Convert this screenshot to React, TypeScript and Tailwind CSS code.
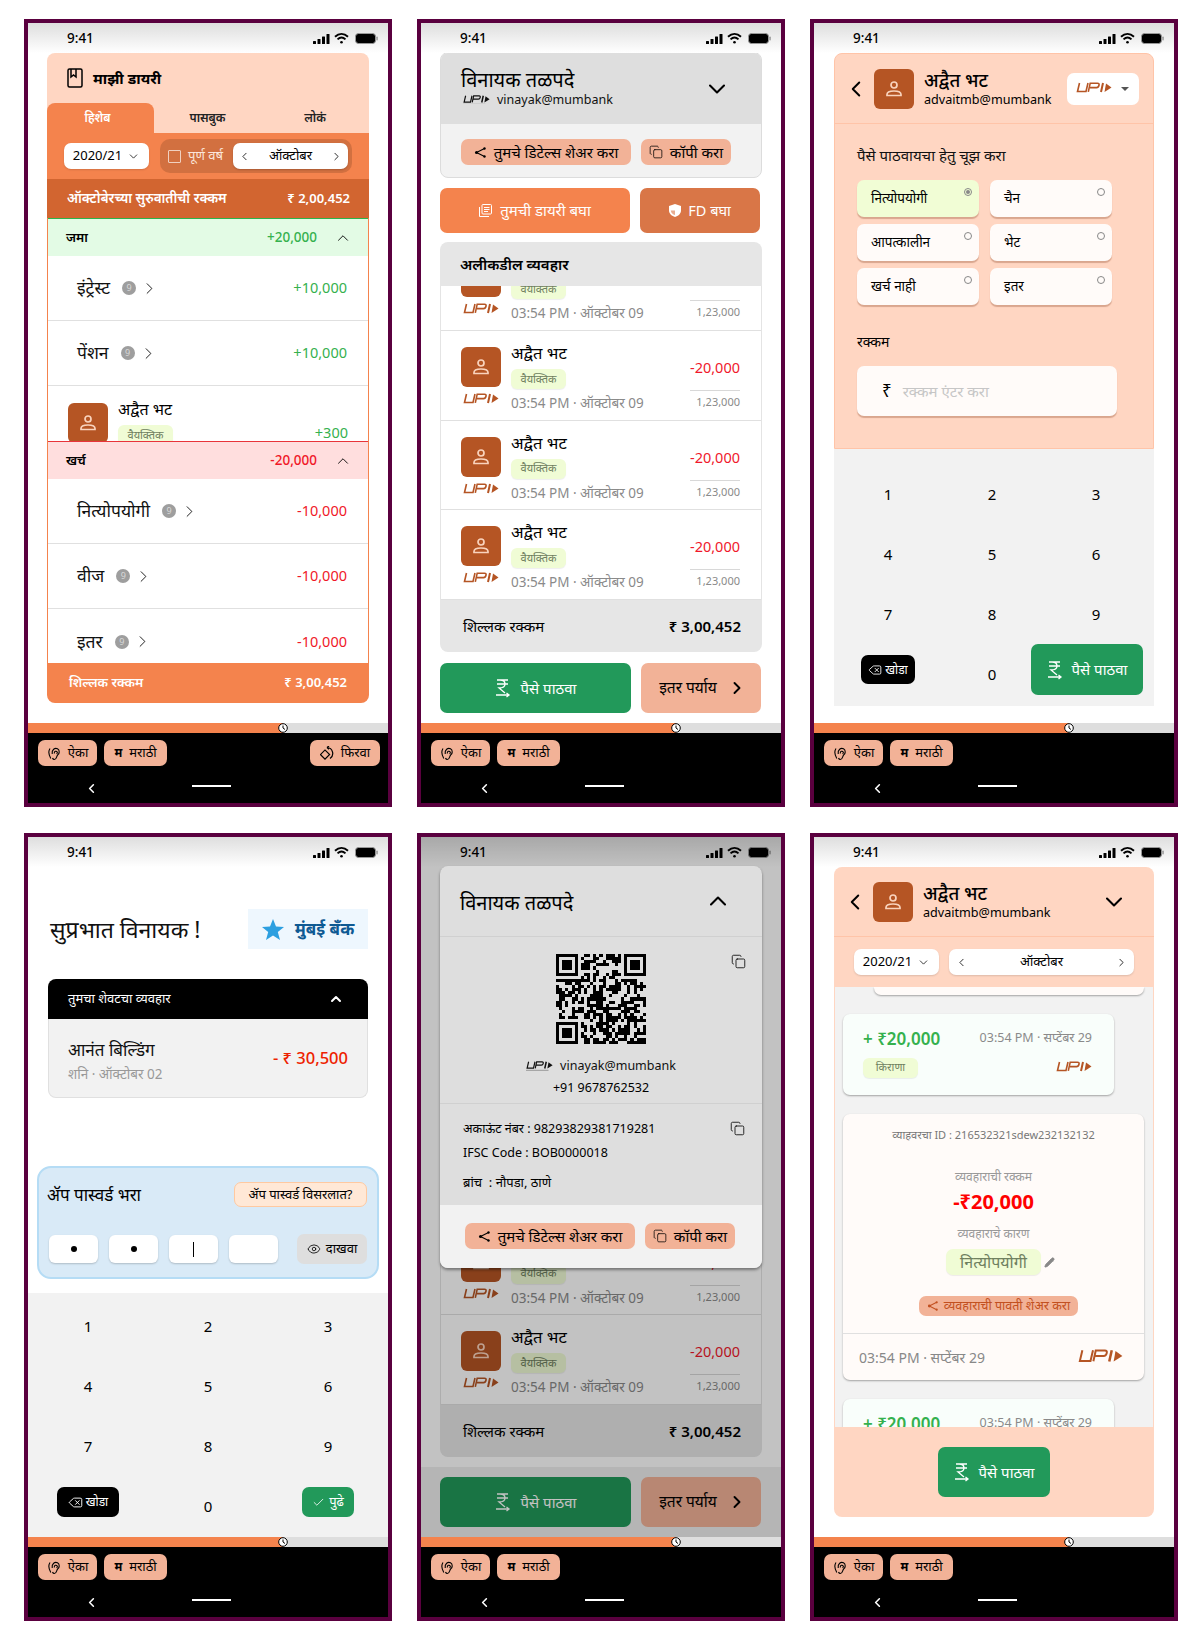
import React from "react";
import { ChevronDown, ChevronUp, ChevronLeft, ChevronRight, Copy, Delete, Eye, Check, Pencil } from "lucide-react";

const Upi = ({ color = "#b55524", w = 36, sub = false }: { color?: string; w?: number; sub?: boolean }) => (
  <svg width={w} height={(w * 13) / 36} viewBox="0 0 36 13" fill="none">
    <path d="M3.500 1 L1.500 9.500 H10 L12 1" stroke={color} strokeWidth="1.600" />
    <path d="M12.300 9.800 L14.200 1.200 H21.500 Q23.500 1.200 23 3.300 Q22.500 5.600 20.500 5.600 H14" stroke={color} strokeWidth="1.600" />
    <path d="M27 1 L25 10" stroke={color} strokeWidth="2" />
    <path d="M30 1.500 L35.500 5.500 L28.500 10 Z" fill={color} />
    {sub && <rect x="0" y="11.800" width="30" height="1" fill={color} opacity=".45" />}
  </svg>
);

const Person = () => (
  <svg width="18" height="18" viewBox="0 0 18 18" fill="none" stroke="#f9d3bd" strokeWidth="1.700">
    <circle cx="9" cy="5" r="3" />
    <path d="M2 15.500 v-1 c0-2.400 3-3.500 7-3.500 s7 1.100 7 3.500 v1 z" />
  </svg>
);

const Avatar = () => (
  <div className="w-[40px] h-[40px] rounded-[6px] bg-[#b55524] flex items-center justify-center shrink-0">
    <Person />
  </div>
);

const ShareIcon = ({ color = "#000", size = 13 }: { color?: string; size?: number }) => (
  <svg width={size} height={size} viewBox="0 0 13 13" fill={color} stroke={color} strokeWidth="1.100">
    <path d="M10.500 2.500 L2.500 6.500 L10.500 10.500" fill="none" />
    <circle cx="10.500" cy="2.500" r="1.200" stroke="none" />
    <circle cx="2.500" cy="6.500" r="1.500" stroke="none" />
    <circle cx="10.500" cy="10.500" r="1.200" stroke="none" />
  </svg>
);

const EarIcon = () => (
  <svg width="14" height="15" viewBox="0 0 14 15" fill="none" stroke="#000" strokeWidth="1.100">
    <path d="M3 2.500 Q0.300 6.500 3.800 12.500" />
    <path d="M5.200 8 C4.500 3.500 8 1.500 10.500 2.800 C13 4.300 12.500 7.500 10.800 8.800 C9.300 10 10 13.500 7.300 13.500 C6.300 13.500 5.800 12.800 5.500 12" />
    <path d="M7.300 7.500 C7 5.300 9.300 4.500 10.200 6 C10.600 6.800 10.200 7.500 9.500 7.800" />
  </svg>
);

const RupeeSend = () => (
  <svg width="16" height="20" viewBox="0 0 16 20" fill="none" stroke="#fff" strokeWidth="1.300">
    <path d="M2 2 H13 M2 6 H13 M5 2 C9 2 10 4 10 6 C10 8 8 10 4 10 L10 15" />
    <path d="M1 17 H14 M11.500 15 L14 17 L11.500 19" />
  </svg>
);

const Status = () => (
  <div className="h-[30px] shrink-0 relative flex items-center justify-between pl-[39px] pr-[10px] pt-[1px] bg-gradient-to-b from-[#dedede] to-[#ffffff]">
    <span className="text-[13.500px] text-black font-medium">9:41</span>
    <div className="flex items-center gap-[4px]">
      <svg width="17" height="10" viewBox="0 0 17 10" fill="#000">
        <rect x="0" y="7" width="3" height="3" rx=".5" /><rect x="4.500" y="5" width="3" height="5" rx=".5" /><rect x="9" y="2.500" width="3" height="7.500" rx=".5" /><rect x="13.500" y="0" width="3" height="10" rx=".5" />
      </svg>
      <svg width="15" height="11" viewBox="0 0 15 11" fill="none" stroke="#000" strokeWidth="1.900">
        <path d="M1 3.800 C5 0 10 0 14 3.800" /><path d="M3.500 6.400 C6 4 9 4 11.500 6.400" /><circle cx="7.500" cy="9.300" r="1.300" fill="#000" stroke="none" />
      </svg>
      <svg width="23" height="11" viewBox="0 0 23 11" className="ml-[2px]">
        <rect x=".5" y=".5" width="20" height="10" rx="3" fill="#000" stroke="#999" />
        <rect x="21.300" y="3.500" width="1.500" height="4" rx=".7" fill="#999" />
      </svg>
    </div>
  </div>
);

const Pill = ({ icon, label, w, text = "text-[13px]" }: { icon: React.ReactNode; label: string; w: string; text?: string }) => (
  <div className={`h-[26px] rounded-[7px] bg-[#f2b297] flex items-center justify-center gap-[7px] text-black ${w} ${text}`}>
    {icon}
    <span>{label}</span>
  </div>
);

const Bottom = ({ rotate = false }: { rotate?: boolean }) => (
  <div className="h-[80px] shrink-0 flex flex-col">
    <div className="h-[10px] bg-[#dedede] relative flex">
      <div className="w-[255px] h-full bg-[#f4834d]" />
      <svg className="absolute left-[250px] top-0" width="10" height="10" viewBox="0 0 10 10" fill="#fff" stroke="#000">
        <circle cx="5" cy="5" r="4.300" /><path d="M5 2.500 V5 L7 6.500" fill="none" />
      </svg>
    </div>
    <div className="flex-1 bg-black flex flex-col">
      <div className="flex items-center justify-between pl-[10px] pr-[8px] pt-[7px]">
        <div className="flex gap-[7px]">
          <Pill icon={<EarIcon />} label="ऐका" w="w-[59px]" />
          <Pill icon={<b className="text-[12px]">म</b>} label="मराठी" w="w-[63px]" />
        </div>
        {rotate && (
          <Pill
            w="w-[70px]"
            label="फिरवा"
            icon={
              <svg width="14" height="14" viewBox="0 0 14 14" fill="none" stroke="#000" strokeWidth="1.200">
                <rect x="1.800" y="5.300" width="6.500" height="6.500" transform="rotate(45 5 8.500)" />
                <path d="M7 1.500 A6 6 0 0 1 10 12.500 M7 1.500 L9 0 M7 1.500 L9 3.200" />
              </svg>
            }
          />
        )}
      </div>
      <div className="relative flex-1">
        <ChevronLeft size={15} color="#fff" strokeWidth={2.500} className="absolute left-[56px] top-[15px]" />
        <div className="absolute left-[164px] top-[19px] w-[39px] h-[2px] bg-white" />
      </div>
    </div>
  </div>
);

const Phone = ({ children, rotate }: { children: React.ReactNode; rotate?: boolean }) => (
  <div className="w-[368px] h-[788px] border-4 border-[#5a003f] flex flex-col bg-white">
    <div className="h-[700px] shrink-0 relative flex flex-col overflow-hidden">{children}</div>
    <Bottom rotate={rotate} />
  </div>
);

const YearDrop = () => (
  <div className="w-[85px] h-[26px] rounded-[7px] bg-white shadow-[0_1px_2px_#0002] flex items-center justify-center gap-[5px] text-[13px] text-black shrink-0">
    2020/21 <ChevronDown size={13} strokeWidth={1.400} />
  </div>
);

const Badge = () => (
  <span className="w-[14px] h-[14px] rounded-full bg-[#9e9e9e] text-[#d8d8d8] text-[9px] flex items-center justify-center">9</span>
);

const Row = ({ name, amt, color }: { name: string; amt: string; color: string }) => (
  <div className="h-[65px] shrink-0 border-b border-[#e0e0e0] flex items-center pl-[29px] pr-[21px] last:border-b-0">
    <span className="text-[17.500px] text-[#111] mr-[12px] leading-none">{name}</span>
    <Badge />
    <ChevronRight size={19} strokeWidth={1.100} className="ml-[4px]" />
    <span className="ml-auto text-[14.500px]" style={{ color }}>{amt}</span>
  </div>
);

const Tag = ({ children }: { children: React.ReactNode }) => (
  <span className="flex items-center justify-center h-[20px] w-[55px] rounded-[6px] bg-[#f0fcd5] text-[#6f8060] text-[11px] shadow-[0_1px_1px_#0001]">{children}</span>
);

const Screen1 = () => (
  <>
    <Status />
    <div className="ml-[19px] w-[322px] h-[650px] rounded-[8px] overflow-hidden flex flex-col bg-white">
      <div className="h-[50px] bg-[#ffd6c2] flex items-center pl-[20px] gap-[10px]">
        <svg width="16" height="20" viewBox="0 0 16 20" fill="none" stroke="#000" strokeWidth="1.500">
          <rect x="1" y="1" width="14" height="18" rx="1.500" /><path d="M4 1 V9 L6.500 7 L9 9 V1" />
        </svg>
        <b className="text-[15px] text-black">माझी डायरी</b>
      </div>
      <div className="h-[30px] bg-[#ffd6c2] flex text-[12px] font-semibold text-[#222]">
        <div className="w-[107px] rounded-t-[8px] bg-[#f4834d] text-white flex items-center justify-center pr-[6px]">हिशेब</div>
        <div className="w-[107px] flex items-center justify-center">पासबुक</div>
        <div className="w-[108px] flex items-center justify-center">लोकं</div>
      </div>
      <div className="h-[46px] bg-[#f4834d] flex items-center pl-[17px] gap-[11px]">
        <YearDrop />
        <div className="w-[192px] h-[34px] rounded-[10px] bg-[#d27040] flex items-center pl-[8px] pr-[4px]">
          <span className="w-[13px] h-[13px] border border-[#f0d0c0] rounded-[1px] mr-[7px]" />
          <span className="text-[13px] text-[#fbe6da]">पूर्ण वर्ष</span>
          <div className="ml-auto w-[115px] h-[26px] rounded-[7px] bg-white shadow-[0_1px_2px_#0003] flex items-center justify-between px-[5px] text-[13px]">
            <ChevronLeft size={13} strokeWidth={1.500} /><span>ऑक्टोबर</span><ChevronRight size={13} strokeWidth={1.500} />
          </div>
        </div>
      </div>
      <div className="h-[39px] bg-[#d26530] flex items-center justify-between pl-[20px] pr-[19px] text-white text-[13.500px] font-semibold">
        <span>ऑक्टोबेरच्या सुरुवातीची रक्कम</span><span className="text-[13px]">₹ 2,00,452</span>
      </div>
      <div className="flex-1 border-x border-[#f4834d] flex flex-col min-h-0">
        <div className="h-[38px] shrink-0 border-t border-[#2db34a] bg-[#e3fbe5] flex items-center pl-[18px] pr-[16px]">
          <b className="text-[13px] font-semibold">जमा</b>
          <span className="ml-auto text-[13.500px] font-medium text-[#35b14e] mr-[17px]">+20,000</span>
          <ChevronUp size={18} strokeWidth={1.200} />
        </div>
        <div className="h-[185px] shrink-0 overflow-hidden">
          <Row name="इंट्रेस्ट" amt="+10,000" color="#35b14e" />
          <Row name="पेंशन" amt="+10,000" color="#35b14e" />
          <div className="h-[65px] flex pl-[20px] pr-[20px] pt-[17px] gap-[10px]">
            <Avatar />
            <div>
              <div className="text-[16px] leading-[18px] mt-[-3px]">अद्वैत भट</div>
              <div className="mt-[7px]"><Tag>वैयक्तिक</Tag></div>
            </div>
            <span className="ml-auto text-[14.500px] leading-[20px] text-[#35b14e] mt-[19px]">+300</span>
          </div>
        </div>
        <div className="h-[38px] shrink-0 border-t border-[#e8343a] bg-[#ffdede] flex items-center pl-[18px] pr-[16px]">
          <b className="text-[13px] font-semibold">खर्च</b>
          <span className="ml-auto text-[13.500px] font-medium text-[#f01828] mr-[17px]">-20,000</span>
          <ChevronUp size={18} strokeWidth={1.200} />
        </div>
        <div className="flex-1 min-h-0 overflow-hidden">
          <Row name="नित्योपयोगी" amt="-10,000" color="#f01828" />
          <Row name="वीज" amt="-10,000" color="#f01828" />
          <Row name="इतर" amt="-10,000" color="#f01828" />
        </div>
      </div>
      <div className="h-[40px] shrink-0 bg-[#f4834d] flex items-center justify-between pl-[22px] pr-[22px] text-white text-[13px] font-semibold">
        <span>शिल्लक रक्कम</span><span>₹ 3,00,452</span>
      </div>
    </div>
  </>
);

const Handle = ({ text }: { text: string }) => (
  <div className="flex items-center gap-[7px] text-[12.500px] text-[#111] leading-[16px]">
    <Upi color="#111" w={27} sub />
    <span>{text}</span>
  </div>
);

const ShareRow = () => (
  <div className="flex gap-[10px]">
    <Pill w="w-[170px]" text="text-[15px]" label="तुमचे डिटेल्स शेअर करा" icon={<ShareIcon />} />
    <Pill w="w-[90px]" text="text-[15px]" label="कॉपी करा" icon={<Copy size={14} strokeWidth={1.300} />} />
  </div>
);

const TxItem = () => (
  <div className="h-[89.700px] shrink-0 border-b border-[#e0e0e0] flex pl-[20px] pr-[21px] pt-[16px]">
    <div className="flex flex-col items-center w-[40px] shrink-0">
      <Avatar />
      <div className="mt-[6px]"><Upi /></div>
    </div>
    <div className="ml-[10px] flex flex-col">
      <div className="text-[16.500px] leading-[18px] mt-[-3px]">अद्वैत भट</div>
      <div className="mt-[7px]"><Tag>वैयक्तिक</Tag></div>
      <div className="mt-[6px] text-[13.500px] text-[#8a8a8a] leading-[16px] whitespace-nowrap">03:54 PM · ऑक्टोबर 09</div>
    </div>
    <div className="ml-auto flex flex-col items-end">
      <span className="text-[14.500px] text-[#f0182b] leading-[20px] mt-[10px]">-20,000</span>
      <div className="w-[50px] h-px bg-[#d8d8d8] mt-[13px]" />
      <span className="text-[11px] text-[#8a8a8a] leading-[18px] mt-[2px]">1,23,000</span>
    </div>
  </div>
);

const HomeBody = ({ dim = false }: { dim?: boolean }) => (
  <>
    <Status />
    <div className="ml-[19px] w-[322px] flex flex-col">
      <div className={`h-[126px] rounded-[8px] border border-[#dcdcdc] overflow-hidden flex flex-col bg-[#f2f2f2] mt-[-1px] ${dim ? "mb-[1px]" : "mb-[10px]"}`}>
        <div className="h-[71px] bg-[#dedede] flex items-center justify-between pl-[20px] pr-[30px]">
          <div>
            <div className="text-[20px] leading-[24px] mt-[-2px]">विनायक तळपदे</div>
            <div className="pl-[2px]"><Handle text="vinayak@mumbank" /></div>
          </div>
          <ChevronDown size={28} strokeWidth={1.800} />
        </div>
        <div className="pl-[20px] pt-[15px]"><ShareRow /></div>
      </div>
      <div className="flex gap-[10px] mb-[9px] text-white text-[15px]">
        <div className="w-[190px] h-[45px] rounded-[7px] bg-[#f4834d] flex items-center justify-center gap-[8px]">
          <svg width="13" height="13" viewBox="0 0 13 13" fill="none" stroke="#fff" strokeWidth="1"><rect x="3" y=".5" width="9.500" height="9.500" rx="1" /><path d="M.5 3 V12.500 H10 M5 3.500 H10.500 M5 5.500 H10.500 M5 7.500 H9" /></svg>
          तुमची डायरी बघा
        </div>
        <div className="w-[120px] h-[45px] rounded-[7px] bg-[#d97647] flex items-center justify-center gap-[7px] text-[14.500px]">
          <svg width="12" height="13" viewBox="0 0 12 13" fill="#fff"><path d="M6 0 L12 2 V6.500 C12 10 9 12 6 13 C3 12 0 10 0 6.500 V2 Z" /><path d="M6 2 V6.500 H1.800 C2 9 4 10.500 6 11 Z" fill="#d97647" opacity=".6" /></svg>
          FD बघा
        </div>
      </div>
      <div className="h-[410px] rounded-[8px] overflow-hidden flex flex-col bg-white">
        <div className="h-[44px] shrink-0 bg-[#e6e6e6] flex items-center pl-[20px] text-[15px] font-semibold">अलीकडील व्यवहार</div>
        <div className="h-[314px] shrink-0 flex flex-col justify-end overflow-hidden border-x border-[#e4e4e4]">
          <TxItem /><TxItem /><TxItem /><TxItem />
        </div>
        <div className="flex-1 bg-[#e6e6e6] flex items-center justify-between pl-[23px] pr-[21px]">
          <span className="text-[15px]">शिल्लक रक्कम</span><span className="text-[15px] font-semibold">₹ 3,00,452</span>
        </div>
      </div>
    </div>
    <div className={`mt-auto h-[70px] shrink-0 flex gap-[10px] pl-[19px] pt-[10px] ${dim ? "bg-[#eeeeee]" : ""}`}>
      <div className="w-[191px] h-[50px] rounded-[7px] bg-[#22995a] text-white text-[15px] flex items-center justify-center gap-[10px]">
        <RupeeSend /> पैसे पाठवा
      </div>
      <div className="w-[120px] h-[50px] rounded-[7px] bg-[#f2b297] text-[15.500px] flex items-center justify-center gap-[10px] pl-[4px]">
        इतर पर्याय <ChevronRight size={20} strokeWidth={2.300} />
      </div>
    </div>
  </>
);

const Key = ({ n }: { n: string }) => (
  <div className="h-[60px] flex items-center justify-center text-[15px] text-black">{n}</div>
);

const Option = ({ label, on }: { label: string; on?: boolean }) => (
  <div className={`h-[37px] rounded-[7px] shadow-[0_2px_1px_#d9a68e] flex items-center pl-[14px] text-[13.500px] relative ${on ? "bg-[#f1fdd5]" : "bg-[#fffbf9]"}`}>
    {label}
    <span className="absolute right-[7px] top-[8px] w-[8px] h-[8px] rounded-full border border-[#888] flex items-center justify-center">
      {on && <span className="w-[4px] h-[4px] rounded-full bg-[#888]" />}
    </span>
  </div>
);

const Screen3 = () => (
  <>
    <Status />
    <div className="ml-[20px] w-[320px] flex flex-col">
      <div className="h-[396px] bg-[#ffd6c2] border border-[#ffc4a8] rounded-t-[8px] flex flex-col">
        <div className="h-[70px] border-b border-[#ffc4a8] flex items-center pl-[8px]">
          <ChevronLeft size={26} strokeWidth={1.800} className="mr-[5px] shrink-0" />
          <div className="mr-[10px]"><Avatar /></div>
          <div className="flex-1">
            <div className="text-[18.500px] leading-[24px] font-medium mt-[-2px]">अद्वैत भट</div>
            <div className="text-[12.600px] leading-[16px]">advaitmb@mumbank</div>
          </div>
          <div className="w-[72px] h-[32px] bg-white rounded-[7px] mr-[14px] flex items-center pl-[9px] gap-[9px]">
            <Upi />
            <span className="w-0 h-0 border-x-[4px] border-x-transparent border-t-[4px] border-t-[#555]" />
          </div>
        </div>
        <div className="pl-[22px] pt-[21px]">
          <div className="text-[15px] leading-[20px] text-[#111]">पैसे पाठवायचा हेतु चूझ करा</div>
          <div className="grid grid-cols-[122px_122px] gap-x-[11px] gap-y-[7px] mt-[15px]">
            <Option label="नित्योपयोगी" on /><Option label="चैन" />
            <Option label="आपत्कालीन" /><Option label="भेट" />
            <Option label="खर्च नाही" /><Option label="इतर" />
          </div>
          <div className="text-[14px] leading-[20px] mt-[27px]">रक्कम</div>
          <div className="w-[260px] h-[50px] mt-[14px] rounded-[7px] bg-[#fffbf9] shadow-[0_2px_1px_#d9a68e] flex items-center pl-[25px] gap-[11px]">
            <span className="text-[17px]">₹</span>
            <span className="text-[15px] text-[#c6c6c6]">रक्कम एंटर करा</span>
          </div>
        </div>
      </div>
      <div className="h-[257px] bg-[#f2f2f2] pt-[15px] pl-[2px] grid grid-cols-[104px_104px_104px] auto-rows-[60px]">
        <Key n="1" /><Key n="2" /><Key n="3" />
        <Key n="4" /><Key n="5" /><Key n="6" />
        <Key n="7" /><Key n="8" /><Key n="9" />
        <div className="flex justify-center pt-[11px]">
          <div className="w-[54px] h-[29px] rounded-[7px] bg-black text-white text-[12px] flex items-center justify-center gap-[3px]"><Delete size={14} strokeWidth={1.500} />खोडा</div>
        </div>
        <Key n="0" />
        <div>
          <div className="ml-[-13px] w-[112px] h-[51px] rounded-[7px] bg-[#22995a] text-white text-[15px] flex items-center justify-center gap-[9px]"><RupeeSend />पैसे पाठवा</div>
        </div>
      </div>
    </div>
  </>
);

const Screen4 = () => (
  <>
    <Status />
    <div className="px-[20px] pt-[42px] flex items-center justify-between h-[82px] shrink-0">
      <span className="text-[23px] pl-[2px] text-[#111]">सुप्रभात विनायक !</span>
      <div className="w-[120px] h-[40px] bg-[#eef7fe] flex items-center justify-center gap-[11px] text-[#0e5a93] font-bold text-[17px]">
        <svg width="22" height="21" viewBox="0 0 22 21" fill="#2c9fe0"><path d="M11 0 L14 7.500 L22 8 L15.800 13 L18 21 L11 16.500 L4 21 L6.200 13 L0 8 L8 7.500 Z" /></svg>
        मुंबई बँक
      </div>
    </div>
    <div className="mx-[20px] mt-[30px] h-[119px] shrink-0 flex flex-col">
      <div className="h-[40px] bg-black rounded-t-[8px] flex items-center justify-between pl-[20px] pr-[24px] text-white text-[13px]">
        <span>तुमचा शेवटचा व्यवहार</span><ChevronUp size={16} strokeWidth={3} />
      </div>
      <div className="flex-1 bg-[#f2f2f2] border border-t-0 border-[#e0e0e0] rounded-b-[8px] flex items-center justify-between pl-[19px] pr-[19px]">
        <div className="pt-[5px]">
          <div className="text-[17px] leading-[24px] text-[#111]">आनंत बिल्डिंग</div>
          <div className="text-[13.500px] leading-[20px] mt-[2px] text-[#999]">शनि · ऑक्टोबर 02</div>
        </div>
        <span className="text-[16.500px] font-medium text-[#ee2200]">- ₹ 30,500</span>
      </div>
    </div>
    <div className="mx-[9px] mt-[68px] h-[113px] shrink-0 rounded-[14px] bg-[#d9eaf7] border-2 border-[#b5dcf5] flex flex-col px-[10px]">
      <div className="flex items-center justify-between pt-[14px]">
        <span className="text-[17px] leading-[25px] ml-[-2px]">ॲप पास्वर्ड भरा</span>
        <span className="w-[133px] h-[25px] rounded-[7px] bg-[#ffe8d6] border border-[#ffc9a0] text-[13px] flex items-center justify-center">ॲप पास्वर्ड विसरलात?</span>
      </div>
      <div className="flex items-center mt-[27px]">
        {["•", "•", "|", ""].map((c, i) => (
          <div key={i} className="w-[49px] h-[28px] mr-[11px] rounded-[6px] bg-white shadow-[0_1px_2px_#0003] flex items-center justify-center text-[15px]">
            {c === "•" ? <span className="w-[6px] h-[6px] rounded-full bg-black" /> : c === "|" ? <span className="w-px h-[15px] bg-black" /> : null}
          </div>
        ))}
        <div className="ml-auto w-[70px] h-[30px] rounded-[7px] bg-[#dedede] text-[13px] flex items-center justify-center gap-[5px]"><Eye size={14} strokeWidth={1.400} />दाखवा</div>
      </div>
    </div>
    <div className="mt-[14px] flex-1 bg-[#f2f2f2] pt-[3px] grid grid-cols-3 auto-rows-[60px]">
      <Key n="1" /><Key n="2" /><Key n="3" />
      <Key n="4" /><Key n="5" /><Key n="6" />
      <Key n="7" /><Key n="8" /><Key n="9" />
      <div className="flex justify-center pt-[11px]">
        <div className="w-[62px] h-[30px] rounded-[7px] bg-black text-white text-[12px] flex items-center justify-center gap-[3px]"><Delete size={15} strokeWidth={1.500} />खोडा</div>
      </div>
      <Key n="0" />
      <div className="flex justify-center pt-[11px]">
        <div className="w-[52px] h-[30px] rounded-[7px] bg-[#22995a] text-white text-[13px] flex items-center justify-center gap-[4px]"><Check size={13} strokeWidth={1.500} />पुढे</div>
      </div>
    </div>
  </>
);

const QR = () => {
  const n = 29;
  const cells: React.ReactNode[] = [];
  let s = 12345;
  const finder = (x: number, y: number) => x >= 0 && y >= 0 && x < 7 && y < 7 && (x === 0 || y === 0 || x === 6 || y === 6 || (x >= 2 && x <= 4 && y >= 2 && y <= 4));
  for (let y = 0; y < n; y++)
    for (let x = 0; x < n; x++) {
      s = (s * 1103515245 + 12345) & 0x7fffffff;
      const inF = (x < 8 && y < 8) || (x >= n - 8 && y < 8) || (x < 8 && y >= n - 8);
      const on = inF ? finder(x, y) || finder(x - (n - 7), y) || finder(x, y - (n - 7)) : (s >> 16) % 100 < 52;
      if (on) cells.push(<rect key={`${x}-${y}`} x={x} y={y} width="1" height="1" />);
    }
  return (
    <svg width="90" height="90" viewBox="0 0 29 29" fill="#000" shapeRendering="crispEdges">{cells}</svg>
  );
};

const Screen5 = () => (
  <>
    <HomeBody dim />
    <div className="absolute inset-0 bg-black/[0.24]" />
    <div className="absolute left-[19px] top-[29px] w-[322px] h-[402px] rounded-[8px] bg-[#dedede] shadow-[0_2px_3px_#0006] overflow-hidden flex flex-col">
      <div className="h-[71px] shrink-0 border-b border-[#d0d0d0] flex items-center justify-between pl-[20px] pr-[30px] pt-[3px]">
        <span className="text-[20px]">विनायक तळपदे</span><ChevronUp size={28} strokeWidth={1.800} className="mt-[-3px]" />
      </div>
      <div className="h-[167px] shrink-0 border-b border-[#d0d0d0] relative flex flex-col items-center pt-[17px]">
        <QR />
        <Copy size={15} strokeWidth={1.300} className="absolute right-[16px] top-[17px]" />
        <div className="mt-[14px]"><Handle text="vinayak@mumbank" /></div>
        <div className="text-[12.500px] leading-[18px] mt-[5px]">+91 9678762532</div>
      </div>
      <div className="flex-1 relative pl-[23px] pt-[16px] text-[12.500px]">
        <div className="leading-[18px]">अकाऊंट नंबर : 98293829381719281</div>
        <div className="leading-[18px] mt-[6px]">IFSC Code : BOB0000018</div>
        <div className="leading-[18px] mt-[11px] whitespace-pre text-[13px]">ब्रांच  : नौपडा, ठाणे</div>
        <Copy size={15} strokeWidth={1.300} className="absolute right-[17px] top-[17px]" />
      </div>
      <div className="h-[63px] shrink-0 bg-[#f2f2f2] pl-[25px] pt-[18px]"><ShareRow /></div>
    </div>
  </>
);

const GreenCard = () => (
  <div className="w-[271px] h-[81px] rounded-[7px] bg-[#f9fefb] shadow-[0_1px_2px_#0005] shrink-0 pl-[20px] pr-[22px] pt-[12px]">
    <div className="flex items-center justify-between">
      <span className="text-[17px] font-semibold text-[#35b14e]">+ ₹20,000</span>
      <span className="text-[12.500px] text-[#8a8a8a]">03:54 PM · सप्टेंबर 29</span>
    </div>
    <div className="flex items-center justify-between mt-[6px]">
      <Tag>किराणा</Tag>
      <Upi />
    </div>
  </div>
);

const Screen6 = () => (
  <>
    <Status />
    <div className="ml-[20px] w-[320px] h-[650px] rounded-[8px] overflow-hidden flex flex-col">
      <div className="h-[70px] shrink-0 bg-[#ffd6c2] border-b border-[#ffc4a8] flex items-center pl-[8px] pr-[26px]">
        <ChevronLeft size={26} strokeWidth={1.800} className="mr-[5px] shrink-0" />
        <div className="mr-[10px]"><Avatar /></div>
        <div className="flex-1">
          <div className="text-[18.500px] leading-[24px] font-medium mt-[-2px]">अद्वैत भट</div>
          <div className="text-[12.600px] leading-[16px]">advaitmb@mumbank</div>
        </div>
        <ChevronDown size={28} strokeWidth={1.800} />
      </div>
      <div className="h-[50px] shrink-0 bg-[#ffd6c2] flex items-center pl-[20px] gap-[10px]">
        <YearDrop />
        <div className="w-[185px] h-[26px] rounded-[7px] bg-white shadow-[0_1px_2px_#0002] flex items-center justify-between px-[6px] text-[13px]">
          <ChevronLeft size={13} strokeWidth={1.500} /><span>ऑक्टोबर</span><ChevronRight size={13} strokeWidth={1.500} />
        </div>
      </div>
      <div className="h-[440px] shrink-0 bg-[#f2f2f2] border-x border-[#ffd6c2] overflow-hidden flex flex-col pl-[8px]">
        <div className="ml-[31px] w-[270px] h-[8px] shrink-0 rounded-b-[7px] bg-[#fffbf9] shadow-[0_1px_2px_#0005]" />
        <div className="mt-[19px]"><GreenCard /></div>
        <div className="mt-[19px] w-[301px] h-[266px] shrink-0 rounded-[7px] bg-[#fffbf9] shadow-[0_1px_2px_#0005] flex flex-col items-center">
          <div className="text-[11px] text-[#777] mt-[12px] leading-[18px] whitespace-nowrap">व्याहवरचा ID : 216532321sdew232132132</div>
          <div className="text-[12px] text-[#999] mt-[24px] leading-[18px]">व्यवहाराची रक्कम</div>
          <div className="text-[20px] font-bold text-[#f00] leading-[28px] mt-[2px]">-₹20,000</div>
          <div className="text-[12px] text-[#999] mt-[9px] leading-[18px]">व्यवहाराचे कारण</div>
          <div className="relative mt-[6px]">
            <span className="w-[95px] h-[26px] rounded-[7px] bg-[#f0fcd5] text-[#6f8060] text-[16px] flex items-center justify-center shadow-[0_1px_1px_#0001]">नित्योपयोगी</span>
            <Pencil size={11} fill="#888" color="#888" className="absolute left-[98px] top-[8px]" />
          </div>
          <div className="w-[159px] h-[20px] mt-[21px] ml-[10px] rounded-[7px] bg-[#f2b297] text-[#c25020] text-[12.500px] flex items-center justify-center gap-[5px] whitespace-nowrap">
            <ShareIcon color="#c25020" size={12} />व्यवहाराची पावती शेअर करा
          </div>
          <div className="mt-auto w-full h-[47px] border-t border-[#e0e0e0] flex items-center justify-between pl-[16px] pr-[21px]">
            <span className="text-[14px] text-[#888]">03:54 PM · सप्टेंबर 29</span>
            <Upi w={45} />
          </div>
        </div>
        <div className="mt-[19px]"><GreenCard /></div>
      </div>
      <div className="flex-1 bg-[#ffd6c2] flex items-center justify-center">
        <div className="w-[112px] h-[50px] rounded-[7px] bg-[#22995a] text-white text-[15px] flex items-center justify-center gap-[9px]"><RupeeSend />पैसे पाठवा</div>
      </div>
    </div>
  </>
);

export default function App() {
  return (
    <div className="w-[1201px] h-[1640px] bg-white pt-[19px] pl-[24px] [font-family:'Noto_Sans',sans-serif] text-black">
      <div className="grid grid-cols-[368px_368px_368px] gap-x-[25px] gap-y-[26px]">
        <Phone rotate><Screen1 /></Phone>
        <Phone><HomeBody /></Phone>
        <Phone><Screen3 /></Phone>
        <Phone><Screen4 /></Phone>
        <Phone><Screen5 /></Phone>
        <Phone><Screen6 /></Phone>
      </div>
    </div>
  );
}
